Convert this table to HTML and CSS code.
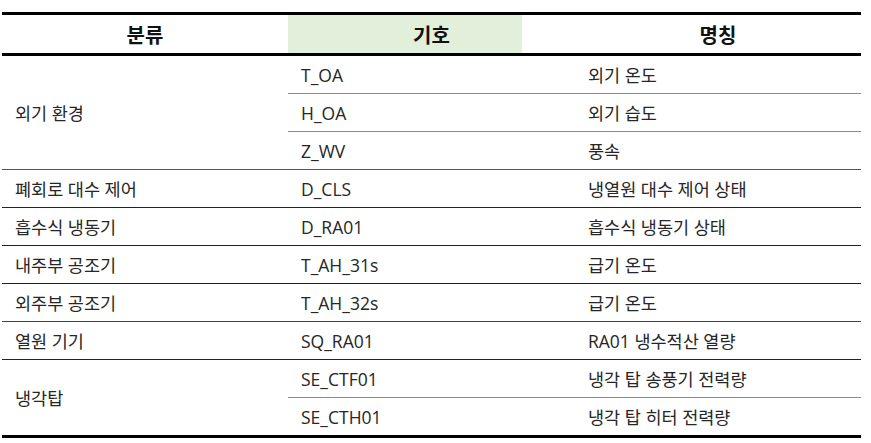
FILE: index.html
```html
<!DOCTYPE html>
<html lang="ko">
<head>
<meta charset="utf-8">
<title>분류 기호 명칭</title>
<link rel="stylesheet" href="styles.css">
</head>
<body>
<table class="tbl">
  <colgroup>
    <col class="c1"><col class="c2"><col class="c3">
  </colgroup>
  <thead>
    <tr>
      <th>분류</th>
      <th class="code">기호</th>
      <th>명칭</th>
    </tr>
  </thead>
  <tbody>
    <tr>
      <td rowspan="3" class="grp">외기 환경</td>
      <td class="in">T_OA</td>
      <td class="in">외기 온도</td>
    </tr>
    <tr>
      <td class="in">H_OA</td>
      <td class="in">외기 습도</td>
    </tr>
    <tr>
      <td class="gend">Z_WV</td>
      <td class="gend">풍속</td>
    </tr>
    <tr>
      <td>폐회로 대수 제어</td>
      <td>D_CLS</td>
      <td>냉열원 대수 제어 상태</td>
    </tr>
    <tr>
      <td>흡수식 냉동기</td>
      <td>D_RA01</td>
      <td>흡수식 냉동기 상태</td>
    </tr>
    <tr>
      <td>내주부 공조기</td>
      <td>T_AH_31s</td>
      <td>급기 온도</td>
    </tr>
    <tr>
      <td class="soft">외주부 공조기</td>
      <td class="soft">T_AH_32s</td>
      <td class="soft">급기 온도</td>
    </tr>
    <tr>
      <td>열원 기기</td>
      <td>SQ_RA01</td>
      <td>RA01 냉수적산 열량</td>
    </tr>
    <tr>
      <td rowspan="2" class="last">냉각탑</td>
      <td class="in">SE_CTF01</td>
      <td class="in">냉각 탑 송풍기 전력량</td>
    </tr>
    <tr>
      <td class="last">SE_CTH01</td>
      <td class="last">냉각 탑 히터 전력량</td>
    </tr>
  </tbody>
</table>
</body>
</html>
```

FILE: styles.css
```css
html, body {
  margin: 0;
  padding: 0;
  background: #ffffff;
}

body {
  font-family: "Open Sans", "Noto Sans CJK KR", sans-serif;
  color: #1e1e1e;
}

.tbl {
  margin: 12px 0 0 2px;
  width: 859px;
  border-collapse: separate;
  border-spacing: 0;
  table-layout: fixed;
}

.c1 { width: 286px; }
.c2 { width: 287px; }
.c3 { width: 286px; }

.tbl th {
  box-sizing: border-box;
  height: 44px;
  padding: 0;
  border-top: 3px solid #000;
  border-bottom: 3px solid #000;
  font-family: "Noto Sans CJK KR", sans-serif;
  font-weight: 700;
  font-size: 20px;
  color: #111;
  text-align: center;
  vertical-align: middle;
}

.tbl th.code {
  background: linear-gradient(to right, #e2efda 234px, #ffffff 234px);
}

.tbl td {
  box-sizing: border-box;
  height: 38px;
  padding: 0 0 0 13px;
  border-bottom: 1px solid #222;
  font-size: 17.5px;
  line-height: 20px;
  vertical-align: middle;
  white-space: nowrap;
  color: #262626;
}

.tbl td.grp {
  border-bottom-color: #555;
}

.tbl td.in {
  border-bottom-color: #8a8a8a;
}

.tbl td.gend {
  border-bottom-color: #555;
}

.tbl td.soft {
  border-bottom-color: #444;
}

.tbl td.last {
  border-bottom: 3px solid #000;
}

.tbl tr:last-child td.last {
  height: 40px;
}
```
